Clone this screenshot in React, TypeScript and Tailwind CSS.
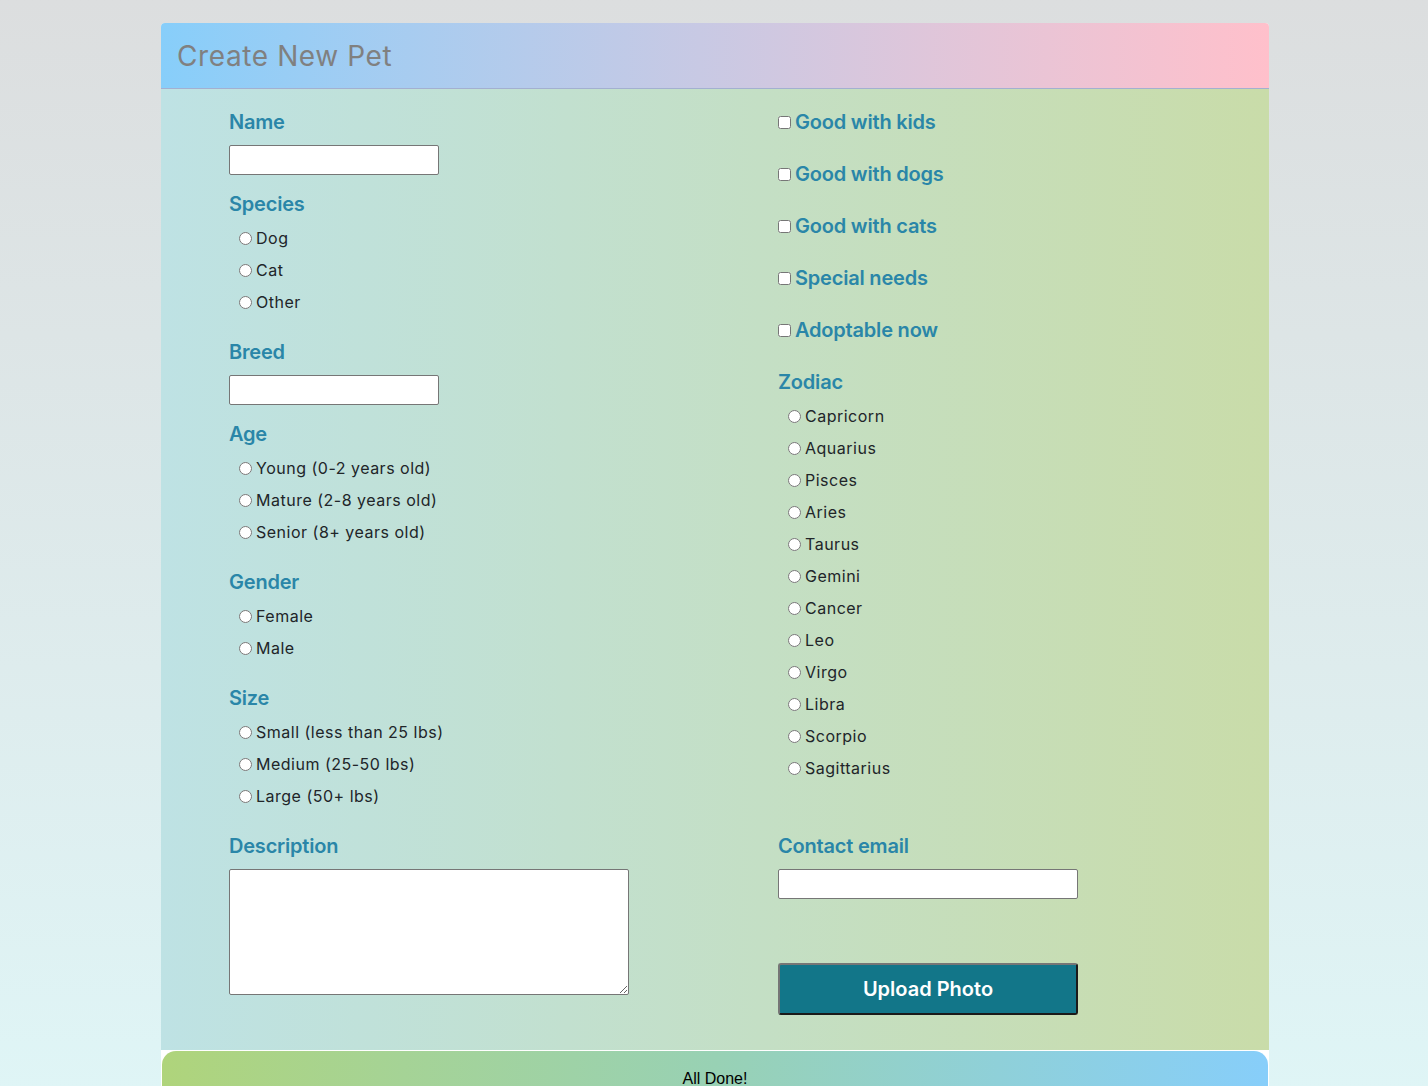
import React from "react";

const font = { fontFamily: "Inter, 'Noto Sans', sans-serif" };

function Radio({ label, name }: { label: string; name: string }) {
  return (
    <label className="flex h-[32px] items-center pl-[10px] text-[16px] tracking-[0.5px] text-[#212529]">
      <input type="radio" name={name} className="m-0 mr-[4px] h-[13px] w-[13px]" />
      <span>{label}</span>
    </label>
  );
}

function Heading({ children }: { children: React.ReactNode }) {
  return <div className="h-[30px] text-[20px] font-semibold leading-[30px] tracking-[-0.2px] text-[#2a86a8]">{children}</div>;
}

function Check({ label }: { label: string }) {
  return (
    <label className="flex h-[30px] items-center text-[20px] font-semibold tracking-[-0.2px] text-[#2a86a8]">
      <input type="checkbox" className="m-0 mr-[4px] h-[13px] w-[13px]" />
      <span>{label}</span>
    </label>
  );
}

const textInput = "block h-[30px] border border-[#767676] bg-white rounded-[2px]";

export default function App() {
  const zodiac = ["Capricorn", "Aquarius", "Pisces", "Aries", "Taurus", "Gemini", "Cancer", "Leo", "Virgo", "Libra", "Scorpio", "Sagittarius"];
  return (
    <div className="min-h-[1086px] bg-gradient-to-b from-[#dcdedf] to-[#dff5f6] pt-[23px]" style={font}>
      <div className="ml-[161px] w-[1108px] overflow-hidden rounded-[4px] bg-white">
        <div className="flex h-[66px] items-center border-b border-[#a3b0d0] bg-gradient-to-r from-[#87cefa] to-[#ffc0cb] px-[16px]">
          <h1 className="text-[28px] font-normal tracking-[0.6px] text-[#808080]">Create New Pet</h1>
        </div>
        <div className="bg-gradient-to-r from-[#bee2e4] to-[#c9dca9] pb-[35px] pl-[68px] pt-[18px]">
          <div className="grid grid-cols-[549px_1fr]">
            <div className="flex flex-col">
              <Heading>Name</Heading>
              <input className={`${textInput} mt-[8px] w-[210px]`} />
              <div className="mt-[14px]"><Heading>Species</Heading></div>
              <div className="mt-[3px]">
                <Radio name="species" label="Dog" />
                <Radio name="species" label="Cat" />
                <Radio name="species" label="Other" />
              </div>
              <div className="mt-[19px]"><Heading>Breed</Heading></div>
              <input className={`${textInput} mt-[8px] w-[210px]`} />
              <div className="mt-[14px]"><Heading>Age</Heading></div>
              <div className="mt-[3px]">
                <Radio name="age" label="Young (0-2 years old)" />
                <Radio name="age" label="Mature (2-8 years old)" />
                <Radio name="age" label="Senior (8+ years old)" />
              </div>
              <div className="mt-[19px]"><Heading>Gender</Heading></div>
              <div className="mt-[3px]">
                <Radio name="gender" label="Female" />
                <Radio name="gender" label="Male" />
              </div>
              <div className="mt-[19px]"><Heading>Size</Heading></div>
              <div className="mt-[3px]">
                <Radio name="size" label="Small (less than 25 lbs)" />
                <Radio name="size" label="Medium (25-50 lbs)" />
                <Radio name="size" label="Large (50+ lbs)" />
              </div>
            </div>
            <div className="flex flex-col">
              <div className="flex flex-col gap-[22px]">
                <Check label="Good with kids" />
                <Check label="Good with dogs" />
                <Check label="Good with cats" />
                <Check label="Special needs" />
                <Check label="Adoptable now" />
              </div>
              <div className="mt-[22px]"><Heading>Zodiac</Heading></div>
              <div className="mt-[3px]">
                {zodiac.map((z) => (
                  <Radio key={z} name="zodiac" label={z} />
                ))}
              </div>
            </div>
            <div className="mt-[19px] flex flex-col">
              <Heading>Description</Heading>
              <textarea className="mt-[8px] block h-[126px] w-[400px] rounded-[2px] border border-[#767676] bg-white" />
            </div>
            <div className="mt-[19px] flex flex-col">
              <Heading>Contact email</Heading>
              <input className={`${textInput} mt-[8px] w-[300px]`} />
              <button className="mt-[64px] h-[52px] w-[300px] rounded-[3px] border-2 border-t-[#767676] border-l-[#767676] border-r-[#1a1a1a] border-b-[#1a1a1a] bg-[#127689] text-[20px] font-semibold text-white">
                Upload Photo
              </button>
            </div>
          </div>
        </div>
        <div className="mx-[1px] mt-[1px] h-[40px] rounded-t-[14px] bg-gradient-to-r from-[#afd47b] via-[#98d1b4] to-[#87cefa] pt-[19px] text-center text-[16px] leading-[18px] text-black" style={{ fontFamily: "'Liberation Sans', Arial, sans-serif" }}>
          All Done!
        </div>
      </div>
    </div>
  );
}
